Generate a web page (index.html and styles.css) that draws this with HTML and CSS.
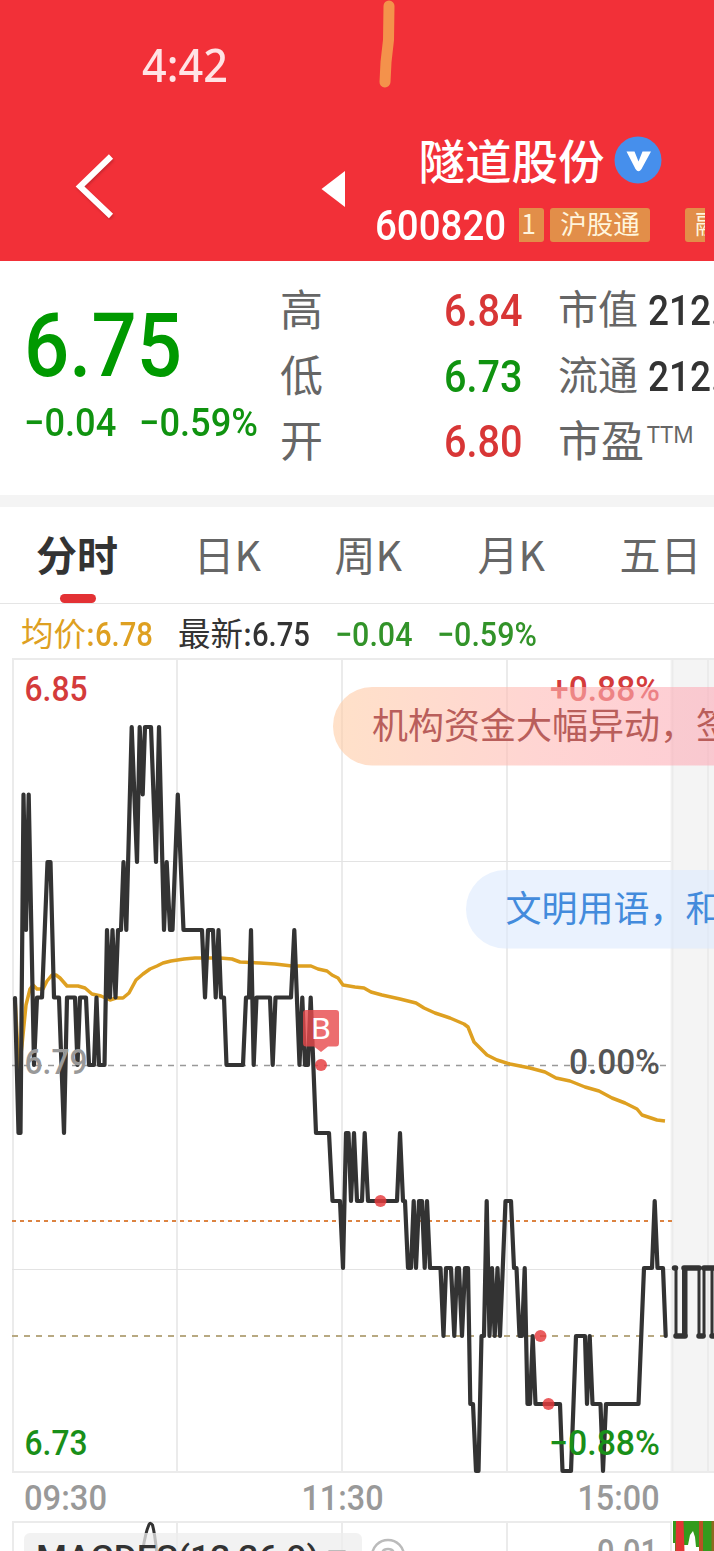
FILE: index.html
```html
<!DOCTYPE html>
<html lang="zh-CN">
<head>
<meta charset="utf-8">
<title>隧道股份 600820</title>
<link rel="stylesheet" href="styles.css">
</head>
<body>
<header class="top">
  <svg class="scribble" width="30" height="92" viewBox="374 0 30 92"><path d="M389 6L388.500 40L386 62L385 82" /></svg>
  <div class="status"><span class="num clock">4:42</span></div>
  <div class="nav">
    <svg class="back" width="44" height="70" viewBox="72 150 44 70"><path d="M111 156.500L80 186.500L111 216"/></svg>
    <svg class="prev" width="26" height="38" viewBox="320 170 26 38"><path d="M321.500 189L345 171V207Z"/></svg>
    <div class="title">
      <div class="name"><span>隧道股份</span>
        <svg width="48" height="48" viewBox="0 0 48 48"><circle cx="24" cy="24" r="23.500" fill="#468fec"/><path d="M12.500 15.500H20.500L24.500 25.500L28.500 15.500H37L27.500 33Q24.500 37.500 21.500 33Z" fill="#fff"/></svg>
      </div>
      <div class="code"><span class="num ticker">600820</span><div class="tags"><span class="tag cut">1</span><span class="tag">沪股通</span><span class="tag last">融</span></div></div>
    </div>
  </div>
</header>
<section class="quote">
  <div class="price">
    <div class="num big">6.75</div>
    <div class="change"><span class="num">−0.04</span><span class="num">−0.59%</span></div>
  </div>
  <div class="stats">
    <span>高</span><b class="num up">6.84</b><span class="small">市值</span><b class="num dark">212.</b>
    <span>低</span><b class="num down">6.73</b><span class="small">流通</span><b class="num dark">212.</b>
    <span>开</span><b class="num up">6.80</b><span class="pe">市盈<sup>TTM</sup></span>
  </div>
</section>
<nav class="tabs">
  <span class="tab active">分时</span><span class="tab">日K</span><span class="tab">周K</span><span class="tab">月K</span><span class="tab">五日</span>
</nav>
<div class="legend">
  <span class="avg">均价:</span><span class="num avg">6.78</span>
  <span class="latest">最新:</span><span class="num">6.75</span>
  <span class="num diff">−0.04</span><span class="num pct">−0.59%</span>
</div>
<svg class="chart" width="714" height="893" viewBox="0 658 714 893">
  <rect x="670.500" y="658" width="44" height="815" fill="#f4f4f4"/>
  <g class="grid">
    <path d="M12 659H714M12 1472H714M13 658V1473M177 658V1473M342 658V1473M507 658V1473M672.500 658V1473M708 658V1473"/>
    <path d="M12 861.500H671M12 1269.500H671" class="thin"/>
    <path d="M12 1522H672M13 1521V1551M177 1521V1551M342 1521V1551M507 1521V1551M671 1521V1551"/>
  </g>
  <path class="base" d="M12 1065.500H666"/>
  <path class="cost" d="M12 1221H672"/>
  <path class="current" d="M12 1336H666"/>
  <path class="average" d="M15 998L19 1070L22 1045L26 1005L30 989L33 985L37 989L43 989L47 981L52 975L56 975L60 978L67 986L78 986L85 988L92 994L101 996L110 1000L116 998L123 998L129 993L136 980L143 974L150 969L157 966L163 963L171 961L184 959L195 958L220 958L232 959L240 962L260 963L275 964L292 966L311 966L318 969L327 971L332 975L338 978L343 985L355 987L364 988L371 992L382 995L400 999L416 1003L424 1008L435 1013L450 1018L464 1024L468 1027L474 1042L480 1048L487 1055L497 1060L510 1064L530 1068L545 1072L556 1078L570 1081L585 1087L599 1091L612 1098L625 1103L637 1109L642 1115L651 1118L657 1120L665 1121"/>
  <path class="line" d="M15 998L18.500 1133H20.500L23.500 794.500L26 930L28.700 794.500L34 1065L37 997.500H42L47.500 862H50.500L54 997.500H59L64 1133L67 997.500H75L77.500 1065L80 997.500H86L89 1065H94L96.500 997.500L99 1065H104.500L107 930L110 997.500L112.500 930L115.500 997.500L118 930H121L123.500 862L126.300 930L131.700 727L137 862L139.700 727L142.700 794.500L145 727H151L156 862L159 727L164 930L166.700 862L170 930H172.500L177.800 794.500L183.500 930H202L205 997.500L208 930H213L215.700 997.500L218.500 930L221 997.500H224L226.500 1065H243L246 997.500H249L251 930L253.700 1065L256.500 997.500H270L272.700 1065L275.500 997.500H291L294.300 930L299.500 1065L302.300 997.500L305 1065H308L310.700 997.500L316 1133H329L332.500 1201H340L343 1268L346 1133H348.500L351 1201L354 1133L357 1201H362L364.700 1133L368 1201H397L400 1133L403 1201H405L408 1268H411L413.700 1201L416 1268L419 1201H422L424.700 1268L427 1201L430 1268H440.500L443.500 1336L446 1268H451L454.300 1336L457 1268H459L462 1336L465 1268H468L470.300 1404H473L476 1471H478.500L481.500 1336H484L486.700 1201L489.500 1336L492 1268L494.700 1336L497.500 1268L500 1336L505.500 1201H511L514 1268H516.500L519.500 1336H522L524.700 1268L527.500 1404H530L532.700 1336L535.500 1404H560L562.500 1471H571L576 1336H585L587 1404L589.700 1336L592.500 1404H600.500L603 1471L606 1404H638.500L644 1268H652L654.700 1201L657.500 1268H663L665.700 1336"/>
  <path class="after" d="M676 1268V1336M683.500 1268V1336M686 1268V1336M699 1268V1336M704 1268V1336M712 1268V1336" stroke-width="3"/>
  <path class="after" stroke-width="5.500" d="M674.500 1268H675.500M684 1268H699M704 1268H714M676 1336H685M699 1336H703M712 1336H714"/>
  <g class="trade" fill="#e5393c" fill-opacity=".82">
    <circle cx="321" cy="1065" r="6"/><circle cx="380.500" cy="1201" r="6"/><circle cx="540.500" cy="1336" r="6"/><circle cx="548.500" cy="1404" r="6"/>
  </g>
  <path d="M306 1010H336Q339 1010 339 1013V1043Q339 1046.500 336 1046.500H328L321 1052L314 1046.500H306Q303 1046.500 303 1043V1013Q303 1010 306 1010Z" fill="#e7484b" fill-opacity=".8"/>
  <text x="311" y="1038.500" class="mark" textLength="20" lengthAdjust="spacingAndGlyphs">B</text>
  <g class="label">
    <text x="24.500" y="700.500" class="red" textLength="63" lengthAdjust="spacingAndGlyphs">6.85</text>
    <text x="24.500" y="1073.500" class="gray" textLength="63" lengthAdjust="spacingAndGlyphs">6.79</text>
    <text x="24.500" y="1454.500" class="green" textLength="63" lengthAdjust="spacingAndGlyphs">6.73</text>
    <text x="550" y="700.500" class="red" textLength="110" lengthAdjust="spacingAndGlyphs">+0.88%</text>
    <text x="569" y="1074" class="mid" textLength="91" lengthAdjust="spacingAndGlyphs">0.00%</text>
    <text x="549" y="1454.500" class="green" textLength="111" lengthAdjust="spacingAndGlyphs">−0.88%</text>
    <text x="24" y="1510" class="gray" textLength="83" lengthAdjust="spacingAndGlyphs">09:30</text>
    <text x="301.500" y="1510" class="gray" textLength="82" lengthAdjust="spacingAndGlyphs">11:30</text>
    <text x="577.500" y="1510" class="gray" textLength="82" lengthAdjust="spacingAndGlyphs">15:00</text>
    <text x="597" y="1563.500" class="gray" textLength="61" lengthAdjust="spacingAndGlyphs">0.01</text>
  </g>
  <defs><linearGradient id="warm"><stop offset="0" stop-color="#ffcda5"/><stop offset=".45" stop-color="#ffb9b5"/><stop offset="1" stop-color="#fba6b9"/></linearGradient></defs>
  <rect x="333" y="687" width="450" height="78.500" rx="39" fill="url(#warm)" fill-opacity=".6"/>
  <text class="bullet" x="372" y="738.500" fill="#b95e5b">机构资金大幅异动，签</text>
  <rect x="466" y="870" width="350" height="78.500" rx="39" fill="#dceafd" fill-opacity=".6"/>
  <text class="bullet" x="505.500" y="922" fill="#438bdc">文明用语，和</text>
  <path d="M140 1570Q144 1536 149 1524.500Q150.500 1522 152.500 1525Q156 1538 158 1570" fill="none" stroke="#333" stroke-width="3"/>
  <rect x="24" y="1533" width="338" height="40" rx="6" fill="#ededed" fill-opacity=".75"/>
  <text x="36" y="1568.500" class="indicator" textLength="283" lengthAdjust="spacingAndGlyphs">MACDFS(12,26,9)</text>
  <path d="M328 1550H346L337 1560Z" fill="#bbb"/>
  <circle cx="388" cy="1556" r="16" fill="none" stroke="#bbb" stroke-width="2.500"/>
  <path d="M382 1555Q382 1549 388 1549Q394 1549 394 1555" fill="none" stroke="#bbb" stroke-width="2.500"/>
  <path d="M673 1521H714V1551H700L699 1547H696L695 1537L693 1531L690 1535L688 1545H684V1551H675V1543H673Z" fill="#349b1c"/>
  <path d="M676 1521H683.500L684.500 1551H675.500ZM699 1521H703V1551H699Z" fill="#e23535"/>
  <path d="M699 1521H703V1551H699ZM711.500 1521H714V1551H711.500Z" fill="#a95c20" fill-opacity=".75"/>
</svg>
</body>
</html>
```
FILE: styles.css
```css
* { box-sizing: border-box; }
body {
  margin: 0;
  width: 714px;
  height: 1551px;
  overflow: hidden;
  background: #fff;
  color: #333;
  font-family: "Noto Sans CJK SC", sans-serif;
}
svg { display: block; flex: none; }
.num {
  display: inline-block;
  font-family: Roboto, "Noto Sans CJK SC", sans-serif;
  font-weight: 500;
  white-space: nowrap;
  transform-origin: left center;
}
.top { position: relative; height: 261px; background: #f23038; color: #fff; overflow: hidden; }
.scribble { position: absolute; left: 374px; top: 0; }
.scribble path { fill: none; stroke: #f4924b; stroke-width: 11; stroke-linecap: round; stroke-linejoin: round; }
.status { height: 130px; padding: 39px 0 0 142px; }
.clock { font: 500 45px/52px "Noto Sans", sans-serif; color: #ffe3e5; transform: scaleX(.96); }
.nav { display: flex; height: 131px; align-items: flex-start; }
.back { margin: 20px 0 0 72px; }
.back path { fill: none; stroke: #fff; stroke-width: 6; filter: drop-shadow(1px 2px 1px #a8202a80); }
.prev { margin: 40px 0 0 204px; }
.prev path { fill: #fff; }
.title { margin-left: 29px; width: 339px; }
.name { display: flex; padding: 6px 0 0 43.5px; height: 71px; font-size: 46.5px; font-weight: 500; line-height: 50px; }
.name span { margin-top: -2px; }
.name svg { margin: 0 0 0 9px; }
.code { display: flex; align-items: flex-start; }
.ticker { width: 144px; font-size: 43px; line-height: 48px; transform: scaleX(.895); }
.tags { display: flex; margin-top: 7px; width: 186px; height: 34px; overflow: hidden; }
.tag { flex: none; width: 100px; height: 34px; margin-right: 35px; border-radius: 3px; background: #e28e49; color: #fff5dd; font-size: 26.5px; line-height: 30px; text-align: center; }
.tag.cut { width: 25px; margin-right: 6px; border-radius: 0 3px 3px 0; padding-right: 6px; }
.tag.last { margin: 0; padding-left: 10px; text-align: left; }
.quote { display: flex; height: 246px; border-bottom: 12px solid #f4f4f4; }
.price { width: 280px; padding: 34px 0 0 24px; color: #009900; }
.big { height: 104px; font-size: 89px; line-height: 102px; transform: scaleX(.895); }
.change { display: flex; font-size: 39px; line-height: 48px; color: #109310; }
.change .num { width: 115px; transform: scaleX(.93); }
.stats { display: grid; grid-template-columns: 164px 114px 90px 66px; grid-template-rows: repeat(3, 65.5px); padding-top: 16px; font-size: 43px; line-height: 60px; color: #666; white-space: nowrap; }
.stats .num { font-size: 45px; line-height: 68px; transform: scaleX(.88); }
.stats .small { font-size: 40px; line-height: 61px; }
.stats .dark { font-size: 42px; }
.pe { grid-column: span 2; }
.pe sup { margin-left: 3px; font-family: "Noto Sans", sans-serif; font-size: 23px; line-height: 0; vertical-align: 14px; }
.up { color: #d83636; }
.down { color: #109310; }
.dark { color: #333; }
.tabs { display: grid; grid-template-columns: 157.5px 141px 143px 142px 90px; height: 97px; padding-left: 36px; border-bottom: 1px solid #e5e5e5; font-size: 41px; line-height: 93px; color: #666; }
.tab { white-space: nowrap; }
.active { position: relative; font-weight: 700; color: #333; }
.active::after { content: ""; position: absolute; left: 24px; bottom: 0; width: 36px; height: 9px; border-radius: 5px; background: #e33134; }
.legend { display: grid; grid-template-columns: 74px 83px 74px 83px 102px 120px; height: 54px; padding-left: 21px; font-size: 32.5px; line-height: 55px; white-space: nowrap; }
.legend .num { font-size: 34px; line-height: 60px; transform: scaleX(.86); }
.avg { color: #dea021; }
.legend .diff, .legend .pct { color: #329329; }
.legend .diff, .legend .pct { transform: scaleX(.895); }
.chart text { font-family: Roboto, "Noto Sans CJK SC", sans-serif; }
.grid { fill: none; stroke: #ebebeb; stroke-width: 2; }
.thin { stroke-width: 1; stroke: #e3e3e3; }
.base { stroke: #999; stroke-width: 1.7; stroke-dasharray: 6 6; }
.cost { stroke: #dc8342; stroke-width: 2; stroke-dasharray: 4 4; }
.current { stroke: #b8a982; stroke-width: 1.8; stroke-dasharray: 6 6; }
.average { fill: none; stroke: #dea021; stroke-width: 3.5; stroke-linejoin: round; }
.line { fill: none; stroke: #333; stroke-width: 4.2; stroke-linejoin: round; stroke-linecap: round; }
.after { fill: none; stroke: #333; stroke-linecap: round; }
.chart .label text { font-size: 34.5px; font-weight: 500; }
.red { fill: #d43b3b; }
.green { fill: #198f19; }
.gray { fill: #999; }
.mid { fill: #555; }
.chart .mark { fill: #fff; font-size: 29px; }
.chart .bullet { font-family: "Noto Sans CJK SC", sans-serif; font-size: 36px; }
.chart .indicator { fill: #333; font-size: 33px; font-weight: 500; }
```
